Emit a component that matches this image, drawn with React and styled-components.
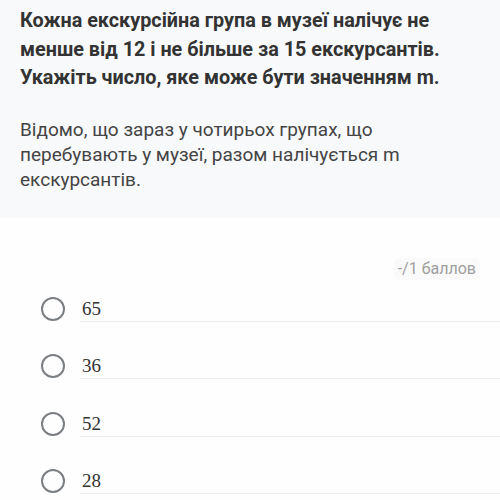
import React from "react";
import styled, { createGlobalStyle } from "styled-components";

const Global = createGlobalStyle`
  html, body { margin: 0; padding: 0; background: #fefefe; }
  body { font-family: Roboto, "Noto Sans", sans-serif; }
`;

const Page = styled.div`
  width: 500px;
  height: 500px;
  overflow: hidden;
  display: flex;
  flex-direction: column;
`;

const Header = styled.div`
  flex: none;
  background: #f8f9fb;
  padding: 7px 20px 0 20px;
  height: 211px;
`;

const Title = styled.h1`
  margin: 0;
  font-size: 19.8px;
  line-height: 28.5px;
  font-weight: 700;
  color: #333;
`;

const Note = styled.p`
  margin: 24px 0 0 0;
  font-size: 19px;
  line-height: 25px;
  font-weight: 400;
  color: #444;
`;

const ScoreRow = styled.div`
  flex: none;
  display: flex;
  justify-content: flex-end;
  padding: 40px 20px 0 0;
`;

const Score = styled.span`
  font-size: 16px;
  line-height: 18px;
  color: #9e9e9e;
  background: #fafafa;
  padding: 2px 4px;
  border-radius: 6px;
`;

const Options = styled.div`
  flex: none;
  display: flex;
  flex-direction: column;
`;

const Option = styled.label`
  display: flex;
  align-items: center;
  height: 57.5px;
  padding-left: 41px;
`;

const Radio = styled.span`
  box-sizing: border-box;
  width: 24px;
  height: 24px;
  border: 2px solid #7b7f83;
  border-radius: 50%;
  flex: none;
`;

const Answer = styled.span`
  flex: 1;
  margin-left: 15px;
  font-family: "Liberation Serif", "DejaVu Serif", serif;
  font-size: 19px;
  line-height: 20px;
  color: #333;
  padding: 3px 0 2px 2px;
  border-bottom: 1px solid #ececec;
`;

const answers = ["65", "36", "52", "28"];

export default function App() {
  return (
    <Page>
      <Global />
      <Header>
        <Title>
          Кожна екскурсійна група в музеї налічує не менше від 12 і не більше за 15 екскурсантів. Укажіть число, яке може бути значенням m.
        </Title>
        <Note>
          Відомо, що зараз у чотирьох групах, що перебувають у музеї, разом налічується m екскурсантів.
        </Note>
      </Header>
      <ScoreRow>
        <Score>-/1 баллов</Score>
      </ScoreRow>
      <Options>
        {answers.map((a) => (
          <Option key={a}>
            <Radio />
            <Answer>{a}</Answer>
          </Option>
        ))}
      </Options>
    </Page>
  );
}
